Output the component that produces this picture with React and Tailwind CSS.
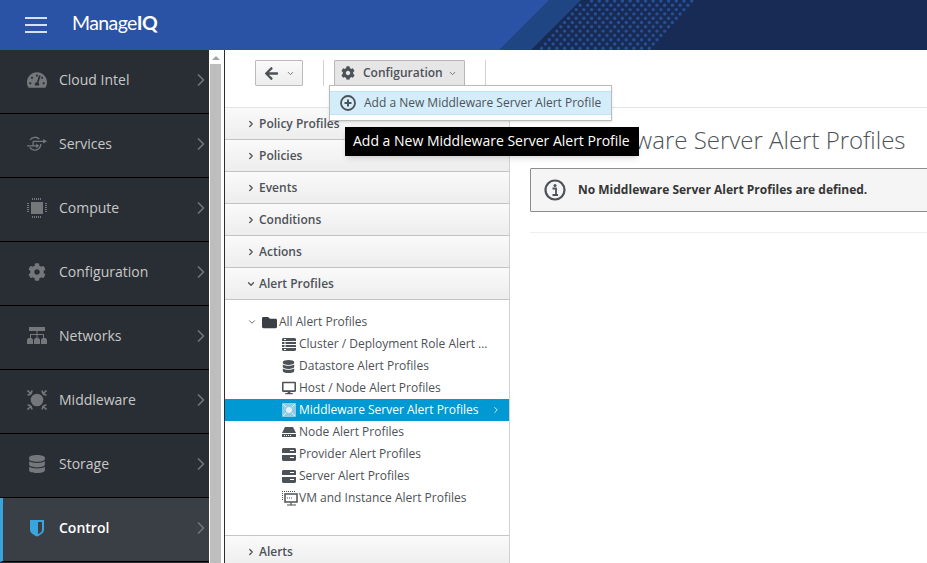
import React from 'react';
import { FaCog, FaDatabase, FaFolder, FaArrowLeft, FaTachometerAlt, FaDesktop } from 'react-icons/fa';
import { ChevronRight, ChevronDown } from 'lucide-react';

const Chip = () => (
  <svg width="20" height="20" viewBox="0 0 20 20" fill="#75787b">
    <rect x="4" y="4" width="12" height="12" />
    <path d="M5 0h1v2H5zM7 0h1v2H7zM9 0h1v2H9zM11 0h1v2h-1zM13 0h1v2h-1zM5 18h1v2H5zM7 18h1v2H7zM9 18h1v2H9zM11 18h1v2h-1zM13 18h1v2h-1zM0 5h2v1H0zM0 7h2v1H0zM0 9h2v1H0zM0 11h2v1H0zM0 13h2v1H0zM18 5h2v1h-2zM18 7h2v1h-2zM18 9h2v1h-2zM18 11h2v1h-2zM18 13h2v1h-2z" />
  </svg>
);

const ServicesIcon = () => (
  <svg width="26" height="20" viewBox="0 0 26 20" fill="none" stroke="#75787b" strokeWidth="1.700">
    <path d="M4 4.500A8 8 0 0 1 16 3.500M18 10A8 8 0 0 1 3.500 14.500" />
    <path d="M0 12.500h13M8 6.500h14M8 6.500v6" />
    <path d="M21 3.500l5 3-5 3zM12 9.500l4 3-4 3z" fill="#75787b" stroke="none" />
  </svg>
);

const NetworkIcon = () => (
  <svg width="20" height="18" viewBox="0 0 20 18" fill="#75787b">
    <path d="M2 0h16v4H2z" />
    <path d="M9.500 4h1v3h-1zM3 7h14v1H3zM3 7h1v4H3zM9.500 7h1v4h-1zM16 7h1v4h-1z" />
    <path d="M0 12.500l1.500-1.500h3l1.500 1.500V17H0zM7 12.500L8.500 11h3l1.500 1.500V17H7zM14 12.500l1.500-1.500h3l1.500 1.500V17h-6z" />
  </svg>
);

const MiddlewareIcon = () => (
  <svg width="20" height="20" viewBox="0 0 20 20" fill="none" stroke="#75787b" strokeWidth="1.600">
    <circle cx="10" cy="10" r="6.300" fill="#75787b" stroke="none" />
    <path d="M0.500 0.500l4 3.500M19.500 0.500l-4 3.500M0.500 19.500l4-3.500M19.500 19.500l-4-3.500M0.500 5C3 5 4.500 3.500 5 0.500M19.500 5C17 5 15.500 3.500 15 0.500M0.500 15C3 15 4.500 16.500 5 19.500M19.500 15C17 15 15.500 16.500 15 19.500" />
  </svg>
);

const ShieldIcon = () => (
  <svg width="16" height="18" viewBox="0 0 16 18">
    <path d="M1 1h14v10c0 3-3.500 5-7 6.500C4.500 16 1 14 1 11z" fill="#39a5dc" />
    <path d="M9 3h4v8c0 1.500-1.500 3-4 4z" fill="#393f44" />
  </svg>
);

const ServerIcon = ({ bars = 2 }) => (
  <svg width="14" height="13" viewBox="0 0 14 13" fill="#4d5258">
    {bars === 2 ? (
      <>
        <path d="M1 0h12l1 1v4H0V1zM0 7h14v5l-1 1H1l-1-1z" />
        <path d="M8 2h4v1H8zM8 9h4v1H8z" fill="#fff" />
      </>
    ) : (
      <>
        <path d="M1 0h12l1 1v11l-1 1H1l-1-1V1z" />
        <path d="M0 3h14v1H0zM0 6h14v1H0zM0 9h14v1H0zM2 1h2v1H2zM2 4.500h2v1H2zM2 7.500h2v1H2zM2 11h2v1H2z" fill="#fff" />
      </>
    )}
  </svg>
);

const NodeIcon = () => (
  <svg width="14" height="10" viewBox="0 0 14 10" fill="#4d5258">
    <path d="M3 0h8l3 6H0z" />
    <path d="M0 7h14v3H0z" />
    <path d="M2 8h1v1H2zM4 8h1v1H4zM6 8h1v1H6zM8 8h1v1H8z" fill="#fff" />
  </svg>
);

const VmIcon = () => (
  <svg width="16" height="15" viewBox="0 0 16 15" fill="none" stroke="#4d5258">
    <path d="M0 0.500h1M2 0.500h1M4 0.500h1M6 0.500h1M8 0.500h1M10 0.500h1M12 0.500h1M0.500 2v1M0.500 4v1M0.500 6v1M0.500 8v1" />
    <rect x="3" y="3" width="12" height="8" strokeWidth="1.500" />
    <path d="M5 7h1M7 7h1M9 7h1M9 11.500v2M5 14h9" strokeWidth="1.200" />
  </svg>
);

const MiddlewareServerIcon = () => (
  <svg width="14" height="14" viewBox="0 0 14 14" fill="#b5dff1">
    <rect width="14" height="14" rx="1" fill="#8fcbe6" />
    <circle cx="7" cy="7" r="3" fill="#e3f3fa" />
    <path d="M1 1l3 3M13 1l-3 3M1 13l3-3M13 13l-3-3" stroke="#e3f3fa" />
  </svg>
);

const PlusCircle = () => (
  <svg width="16" height="16" viewBox="0 0 16 16" fill="none" stroke="#4d5258">
    <circle cx="8" cy="8" r="7" strokeWidth="1.800" />
    <path d="M8 4.500v7M4.500 8h7" strokeWidth="2" />
  </svg>
);

const InfoCircle = () => (
  <svg width="22" height="22" viewBox="0 0 22 22" fill="none" stroke="#4d5258">
    <circle cx="11" cy="11" r="9.500" strokeWidth="2.200" />
    <circle cx="11" cy="6.500" r="1.500" fill="#4d5258" stroke="none" />
    <path d="M8.500 9.500h3.500v6M8.500 16h5.500" strokeWidth="1.800" />
  </svg>
);

const HeaderArt = () => {
  const dots = [];
  for (let row = 0; row < 13; row++) {
    for (let col = 0; col < 22; col++) {
      const y = row * 4.300 + 1;
      const x = 530 + col * 7.700 + (row % 2) * 3.800;
      // band between the two diagonals
      const left = 535 + (50 - y);
      const right = 698 - y;
      if (x > left && x < right) dots.push([x, y]);
    }
  }
  return (
    <svg className="absolute inset-0 pointer-events-none" width="927" height="50" viewBox="0 0 927 50">
      <path d="M499 50L549 0H927V50z" fill="#1f4682" />
      <path d="M531 50L581 0H927V50z" fill="#172b54" />
      {dots.map(([x, y], i) => (
        <circle key={i} cx={x} cy={y} r="1.700" fill="#264f96" />
      ))}
    </svg>
  );
};

const navItems = [
  { label: 'Cloud Intel', icon: <FaTachometerAlt size={20} color="#75787b" /> },
  { label: 'Services', icon: <ServicesIcon />, wide: true },
  { label: 'Compute', icon: <Chip /> },
  { label: 'Configuration', icon: <FaCog size={18} color="#75787b" /> },
  { label: 'Networks', icon: <NetworkIcon /> },
  { label: 'Middleware', icon: <MiddlewareIcon /> },
  { label: 'Storage', icon: <FaDatabase size={18} color="#75787b" /> },
  { label: 'Control', icon: <ShieldIcon />, active: true },
];

const treeItems = [
  { label: 'Cluster / Deployment Role Alert ...', icon: <ServerIcon bars={4} /> },
  { label: 'Datastore Alert Profiles', icon: <FaDatabase size={13} color="#4d5258" /> },
  { label: 'Host / Node Alert Profiles', icon: <FaDesktop size={14} color="#4d5258" /> },
  { label: 'Middleware Server Alert Profiles', icon: <MiddlewareServerIcon />, active: true },
  { label: 'Node Alert Profiles', icon: <NodeIcon /> },
  { label: 'Provider Alert Profiles', icon: <ServerIcon /> },
  { label: 'Server Alert Profiles', icon: <ServerIcon /> },
  { label: 'VM and Instance Alert Profiles', icon: <VmIcon /> },
];

const AccordionHeader = ({ label, open }) => (
  <div className="h-8 shrink-0 flex items-center pl-[21px] border-b border-[#c4c4c4] bg-gradient-to-b from-[#fafafa] to-[#ededed] text-[12px] font-semibold text-[#4d5258]">
    {open ? (
      <ChevronDown size={10} strokeWidth={3} className="mr-[3px]" />
    ) : (
      <ChevronRight size={10} strokeWidth={3} className="mr-[3px]" />
    )}
    {label}
  </div>
);

export default function App() {
  return (
    <div className="w-[927px] h-[563px] overflow-hidden flex flex-col bg-white font-['Open_Sans',sans-serif] relative">
      <header className="relative h-[50px] shrink-0 bg-[#2a53a5] flex items-center">
        <HeaderArt />
        <div className="ml-[25px] w-[22px] flex flex-col gap-[5px]">
          <div className="h-[2px] bg-[#d8dfee]" />
          <div className="h-[2px] bg-[#d8dfee]" />
          <div className="h-[2px] bg-[#d8dfee]" />
        </div>
        <div className="ml-[25px] -mt-[4px] text-white text-[19.5px] tracking-[-0.6px] font-['Lato',sans-serif] leading-none">
          Manage<span className="font-bold">IQ</span>
        </div>
      </header>

      <div className="flex-1 flex min-h-0">
        <nav className="w-[209px] shrink-0 bg-[#292e34] flex flex-col">
          {navItems.map((item) => (
            <div
              key={item.label}
              className={`h-16 shrink-0 flex items-center pb-[4px] border-b border-black relative ${item.active ? 'bg-[#393f44] border-l-[3px] border-l-[#39a5dc]' : ''}`}
            >
              <div className={`${item.active ? 'w-[56px] pl-[24px]' : 'w-[59px] pl-[27px]'} shrink-0`}>
                <div className={`w-5 flex ${item.wide ? 'justify-start' : 'justify-center'}`}>{item.icon}</div>
              </div>
              <span className={`text-[14px] ${item.active ? 'text-white font-semibold' : 'text-[#c8c8c8]'}`}>{item.label}</span>
              <ChevronRight size={20} strokeWidth={2} className="absolute -right-[2px] text-[#72767b]" />
            </div>
          ))}
        </nav>

        <div className="w-[16px] shrink-0 bg-white border-r border-[#292e34] flex flex-col items-center pr-[2px]">
          <div className="w-0 h-0 mt-[6px] border-x-[4px] border-x-transparent border-b-[4px] border-b-[#a3a3a3]" />
          <div className="w-[11px] flex-1 mt-[4px] bg-[#bebebe]" />
        </div>

        <div className="flex-1 min-w-0 flex flex-col">
          <div className="h-[58px] shrink-0 flex items-start pt-[10px] pl-[30px] border-b border-[#e4e4e4]">
            <button className="w-[48px] h-[26px] flex items-center justify-center gap-[7px] rounded-[1px] border border-[#bbb] bg-gradient-to-b from-[#fafafa] to-[#ededed] text-[#4d5258]">
              <FaArrowLeft size={15} />
              <ChevronDown size={9} strokeWidth={2} />
            </button>
            <div className="w-px h-[26px] bg-[#d1d1d1] ml-[20px]" />
            <button className="ml-[10px] w-[131px] h-[26px] flex items-center pl-[6px] rounded-[1px] border border-[#b7b7b7] bg-[#e6e6e6] text-[12px] font-semibold text-[#4d5258]">
              <FaCog size={14} className="mr-[8px]" />
              Configuration
              <ChevronDown size={9} strokeWidth={2} className="ml-[5px]" />
            </button>
            <div className="w-px h-[26px] bg-[#d1d1d1] ml-[20px]" />
          </div>

          <div className="flex-1 min-h-0 flex">
            <aside className="w-[285px] shrink-0 border-r border-[#d1d1d1] flex flex-col overflow-hidden">
              <AccordionHeader label="Policy Profiles" />
              <AccordionHeader label="Policies" />
              <AccordionHeader label="Events" />
              <AccordionHeader label="Conditions" />
              <AccordionHeader label="Actions" />
              <AccordionHeader label="Alert Profiles" open />
              <div className="h-[236px] shrink-0 border-b border-[#c4c4c4] pt-[11px] text-[12px] text-[#4d5258]">
                <div className="h-[22px] flex items-center pl-[22px]">
                  <ChevronDown size={10} strokeWidth={2} className="mr-[5px]" />
                  <FaFolder size={15} color="#393f44" className="mr-[2px]" />
                  All Alert Profiles
                </div>
                {treeItems.map((t) => (
                  <div
                    key={t.label}
                    className={`h-[22px] flex items-center pl-[57px] relative ${t.active ? 'bg-[#0099d3] text-white' : ''}`}
                  >
                    <div className="w-[17px] shrink-0 flex justify-start">{t.icon}</div>
                    {t.label}
                    {t.active && <ChevronRight size={10} strokeWidth={2} className="absolute right-[8px]" />}
                  </div>
                ))}
              </div>
              <AccordionHeader label="Alerts" />
            </aside>

            <main className="flex-1 min-w-0 pl-[20px] overflow-hidden">
              <h1 className="mt-[15px] h-[33px] text-[24px] leading-[33px] font-light text-[#4d5258] whitespace-nowrap">
                All Middleware Server Alert Profiles
              </h1>
              <div className="mt-[12px] w-[420px] h-[44px] flex items-center pl-[13px] bg-[#f5f5f5] border border-[#8b8d8f] rounded-[1px]">
                <InfoCircle />
                <span className="ml-[12px] text-[12px] font-bold text-[#363636]">No Middleware Server Alert Profiles are defined.</span>
              </div>
              <div className="mt-[20px] h-px bg-[#eeeeee]" />
            </main>
          </div>
        </div>
      </div>

      {/* open dropdown */}
      <div className="absolute left-[329px] top-[85px] w-[283px] h-[36px] bg-white border border-[#bbb] shadow-sm pt-[5px]">
        <div className="h-[24px] flex items-center pl-[10px] bg-[#d4edfa] border-y border-[#bfe3f5] text-[12px] text-[#4d5258]">
          <PlusCircle />
          <span className="ml-[8px]">Add a New Middleware Server Alert Profile</span>
        </div>
      </div>

      {/* tooltip */}
      <div className="absolute left-[345px] top-[127px] w-[294px] h-[29px] bg-black text-white text-[14px] leading-[27px] pl-[8px] shadow-md whitespace-nowrap">
        Add a New Middleware Server Alert Profile
      </div>
    </div>
  );
}
